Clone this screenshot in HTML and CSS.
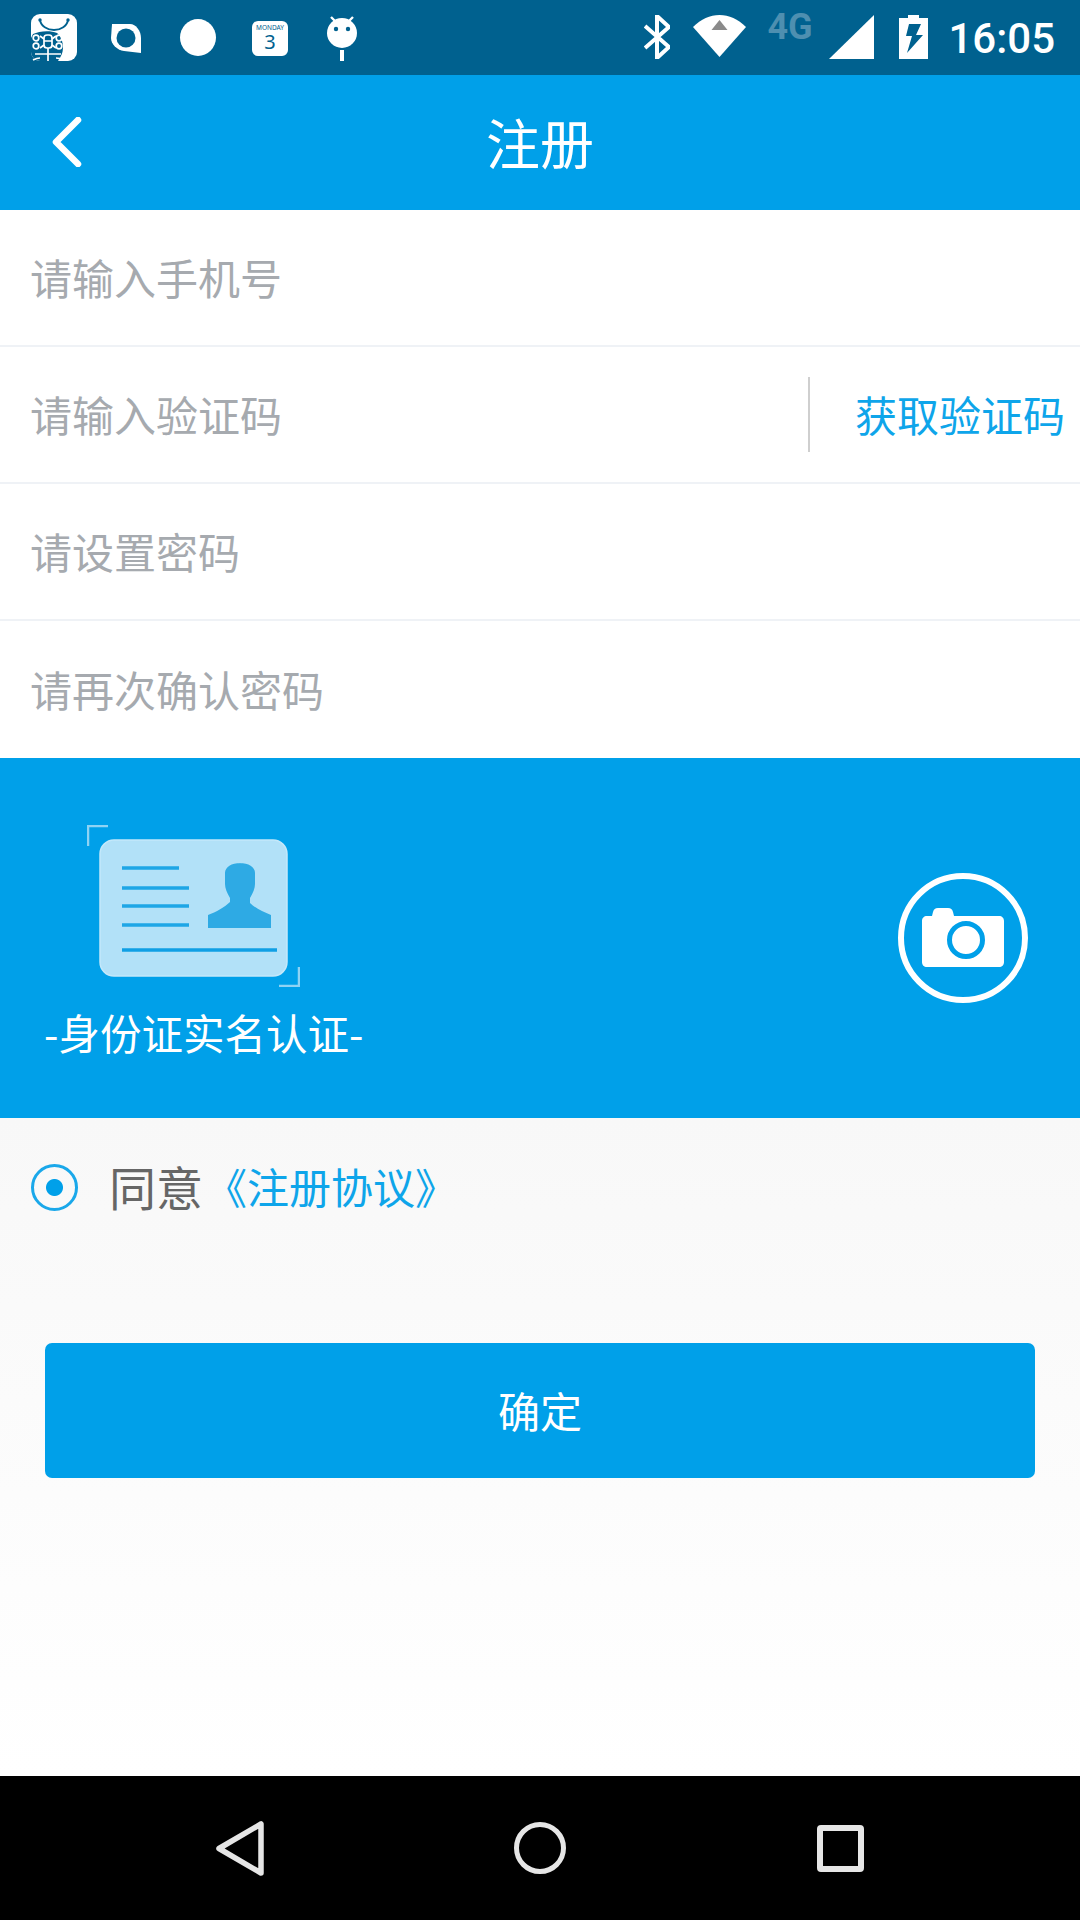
FILE: index.html
```html
<!DOCTYPE html>
<html lang="zh-CN">
<head>
  <meta charset="UTF-8">
  <meta name="viewport" content="width=device-width, initial-scale=1.0">
  <title>注册</title>
  <link rel="stylesheet" href="styles.css">
</head>
<body>
  <div class="phone">
    <!-- Status bar -->
    <div class="status-bar">
      <div class="status-left">
        <svg class="ic-shop" viewBox="0 0 46 47">
          <rect width="46" height="47" rx="9" fill="#fff"/>
          <path d="M9 6c1 6 7 10 14 10s13-4 14-10" fill="none" stroke="#00618f" stroke-width="1.800"/>
          <circle cx="9" cy="6" r="1.700" fill="#00618f"/>
          <circle cx="37" cy="6" r="1.700" fill="#00618f"/>
          <path d="M2 20c6-3 17-4 24-1 4 3 6 9 6 15 0 4-2 9-5 13H9a9 9 0 0 1-9-9V24z" fill="#00618f"/>
          <g fill="none" stroke="#fff" stroke-width="1.700">
            <rect x="13" y="21" width="8" height="13" rx="3"/>
            <path d="M13 27h8M17 34v13M4 40h26M9 44c-3 0-5 1-7 2M25 44c3 0 5 1 7 1M9 22l4 3M25 22l-4 3M9 34l4-3M25 34l-4-3"/>
            <circle cx="5" cy="24" r="2.800"/>
            <circle cx="5" cy="32" r="2.800"/>
            <circle cx="28" cy="24" r="2.800"/>
            <circle cx="28" cy="32" r="2.800"/>
          </g>
        </svg>
        <svg class="ic-ring" viewBox="0 0 30 30">
          <path d="M1 1h18c6 0 11 7 11 14v15l-17-2C6 27 0 21 0 15z" fill="#fff"/>
          <circle cx="15" cy="15" r="9.500" fill="#00618f"/>
        </svg>
        <div class="ic-dot"></div>
        <svg class="ic-cal" viewBox="0 0 36 35">
          <rect width="36" height="35" rx="6" fill="#fff"/>
          <text class="cal-day" x="18" y="9" text-anchor="middle">MONDAY</text>
          <text class="cal-num" x="18" y="28" text-anchor="middle">3</text>
        </svg>
        <svg class="ic-droid" viewBox="0 0 30 45">
          <path d="M4 1l5 5M26 1l-5 5" stroke="#fff" stroke-width="2.400"/>
          <circle cx="15" cy="17" r="15" fill="#fff"/>
          <circle cx="9" cy="13" r="2.200" fill="#00618f"/>
          <circle cx="21" cy="13" r="2.200" fill="#00618f"/>
          <rect x="13" y="34" width="4" height="11" fill="#fff"/>
        </svg>
      </div>
      <div class="status-right">
        <svg class="ic-bt" viewBox="0 0 26 44">
          <path d="M1 11l24 21-12 11V1l12 11L1 33" fill="none" stroke="#fff" stroke-width="4"/>
        </svg>
        <svg class="ic-wifi" viewBox="0 0 53 42">
          <path d="M0 12C8 4 17 0 26.500 0S45 4 53 12L26.500 42z" fill="#fff"/>
          <path d="M26.500 5l8 10h-16z" fill="#8a8a8a"/>
        </svg>
        <span class="net">4G</span>
        <svg class="ic-signal" viewBox="0 0 45 44"><path d="M45 0v44H0z" fill="#fff"/></svg>
        <svg class="ic-battery" viewBox="0 0 29 44">
          <path d="M9 0h11v3h9v41H0V3h9z" fill="#fff"/>
          <path d="M10 9h12l-5 11h7L8 38l5-17H7z" fill="#00618f"/>
        </svg>
        <span class="clock">16:05</span>
      </div>
    </div>

    <!-- Title bar -->
    <header class="title-bar">
      <svg class="back" viewBox="0 0 30 50">
        <path d="M26 3L4 25l22 22" fill="none" stroke="#fff" stroke-width="6.500" stroke-linecap="round" stroke-linejoin="round"/>
      </svg>
      <h1>注册</h1>
    </header>

    <!-- Form rows -->
    <div class="form-list">
      <div class="form-row"><span class="hint">请输入手机号</span></div>
      <div class="form-row">
        <span class="hint">请输入验证码</span>
        <span class="get-code">获取验证码</span>
      </div>
      <div class="form-row"><span class="hint">请设置密码</span></div>
      <div class="form-row"><span class="hint">请再次确认密码</span></div>
    </div>

    <!-- ID card -->
    <div class="id-panel">
      <div class="id-left">
        <svg class="id-card" viewBox="0 0 213 162">
          <path d="M1 21V1h20M212 142v19h-20" fill="none" stroke="#8fd3f4" stroke-width="2.500"/>
          <rect x="13" y="15" width="187" height="136" rx="14" fill="#b2e1f8" stroke="#c4e8fa" stroke-width="1.500"/>
          <g stroke="#1ea6e6" stroke-width="3.500">
            <path d="M35 43h57M35 63h67M35 81h67M35 100h67"/>
            <path d="M35 125h155" stroke="#0f9fe5"/>
          </g>
          <path d="M153.500 38c-9 0-15.500 4-15.500 10v11c0 4 2 9 5 14v4c-5 5-14 10-22 13v13h63V90c-8-3-16-7-21-12v-5c3-5 5-10 5-14V48c0-6-6.500-10-15.500-10z" fill="#2eaae4"/>
        </svg>
        <p class="id-label">-身份证实名认证-</p>
      </div>
      <svg class="camera" viewBox="0 0 130 130">
        <circle cx="65" cy="65" r="62" fill="none" stroke="#fff" stroke-width="6"/>
        <path d="M24 48c0-3 2-5 5-5h5l1-4c1-3 2-4 5-4h10c3 0 4 1 5 4l1 4h45c3 0 5 2 5 5v41c0 3-2 5-5 5H29c-3 0-5-2-5-5z" fill="#fff"/>
        <circle cx="68" cy="67" r="16.500" fill="#fff" stroke="#00a0e9" stroke-width="5"/>
      </svg>
    </div>

    <!-- Agreement and submit -->
    <div class="content">
      <div class="agree">
        <span class="radio"></span>
        <span class="agree-text">同意</span>
        <span class="agree-link">《注册协议》</span>
      </div>
      <button class="submit" type="button">确定</button>
    </div>

    <!-- Nav bar -->
    <div class="nav-bar">
      <svg class="nav-back" viewBox="0 0 48 55">
        <path d="M45 3v49L3 27.500z" fill="none" stroke="#e6e6e6" stroke-width="5.500" stroke-linejoin="round"/>
      </svg>
      <div class="nav-home"></div>
      <div class="nav-recent"></div>
    </div>
  </div>
</body>
</html>
```

FILE: styles.css
```css
/* Basic styles for the page */
* {
  box-sizing: border-box;
}

body {
  margin: 0;
  padding: 0;
  background-color: #fff;
  font-family: "Noto Sans CJK SC", "Noto Sans", sans-serif;
}

.phone {
  width: 1080px;
  height: 1920px;
  display: flex;
  flex-direction: column;
  overflow: hidden;
}

/* Status bar */
.status-bar {
  height: 75px;
  flex: none;
  background-color: #00618f;
  display: flex;
  justify-content: space-between;
  padding: 0 25px 0 31px;
}

.status-left,
.status-right {
  display: flex;
  align-items: flex-start;
}

.ic-shop {
  width: 46px;
  height: 47px;
  margin-top: 14px;
}

.ic-ring {
  width: 30px;
  height: 30px;
  margin: 23px 0 0 34px;
}

.ic-dot {
  width: 36px;
  height: 37px;
  margin: 19px 0 0 39px;
  border-radius: 50%;
  background-color: #fff;
}

.ic-cal {
  width: 36px;
  height: 35px;
  margin: 21px 0 0 36px;
}

.cal-day {
  font-family: "Noto Sans", sans-serif;
  font-size: 6.500px;
  fill: #00618f;
}

.cal-num {
  font-family: "Noto Sans", sans-serif;
  font-size: 20px;
  fill: #00618f;
}

.ic-droid {
  width: 30px;
  height: 45px;
  margin: 16px 0 0 39px;
}

.ic-bt {
  width: 26px;
  height: 44px;
  margin-top: 15px;
}

.ic-wifi {
  width: 53px;
  height: 42px;
  margin: 15px 0 0 23px;
}

.net {
  width: 49px;
  margin: 6px 0 0 21px;
  font-family: "Roboto", sans-serif;
  font-size: 36px;
  font-weight: 700;
  line-height: 42px;
  color: #4e8fb0;
}

.ic-signal {
  width: 45px;
  height: 44px;
  margin: 15px 0 0 13px;
}

.ic-battery {
  width: 29px;
  height: 44px;
  margin: 15px 0 0 25px;
}

.clock {
  margin: 14px 0 0 20px;
  font-family: "Roboto", sans-serif;
  font-size: 42px;
  font-weight: 500;
  line-height: 50px;
  color: #fff;
}

/* Title bar */
.title-bar {
  height: 135px;
  flex: none;
  background-color: #00a0e9;
  position: relative;
  display: flex;
  align-items: center;
  justify-content: center;
}

.title-bar h1 {
  margin: 0 0 3px;
  font-size: 54px;
  font-weight: 400;
  color: #fff;
}

.back {
  position: absolute;
  left: 52px;
  top: 42px;
  width: 30px;
  height: 50px;
}

/* Form rows */
.form-row {
  height: 137px;
  display: flex;
  align-items: center;
  justify-content: space-between;
  padding-left: 30px;
  background-color: #fff;
  border-bottom: 2px solid #eff2f6;
}

.form-row:last-child {
  border-bottom: none;
}

.hint {
  margin-bottom: 2px;
  font-size: 42px;
  color: #a6aaaf;
}

.get-code {
  width: 272px;
  height: 75px;
  padding-left: 45px;
  border-left: 2px solid #cfcfcf;
  font-size: 42px;
  line-height: 73px;
  color: #0ea5ea;
  white-space: nowrap;
}

/* ID card */
.id-panel {
  height: 360px;
  flex: none;
  background-color: #00a0e9;
  display: flex;
  justify-content: space-between;
  align-items: flex-start;
  padding: 67px 52px 0 44px;
}

.id-card {
  display: block;
  width: 213px;
  height: 162px;
  margin-left: 43px;
}

.id-label {
  margin: 17px 0 0;
  font-size: 41.500px;
  line-height: 56px;
  color: #fff;
}

.camera {
  width: 130px;
  height: 130px;
  margin-top: 48px;
}

/* Agreement and submit */
.content {
  flex: 1;
  background: linear-gradient(#f8f8f8, #fff);
  padding: 0 45px;
}

.agree {
  height: 138px;
  display: flex;
  align-items: center;
  margin-left: -14px;
}

.radio {
  width: 47px;
  height: 47px;
  border: 3px solid #1aa8ea;
  border-radius: 50%;
  background: radial-gradient(circle, #00a0e9 0 8px, transparent 9px);
}

.agree-text {
  margin: 0 0 4px 31px;
  font-size: 47px;
  color: #666;
}

.agree-link {
  margin: 0 0 4px 2px;
  font-size: 42px;
  color: #0ea5ea;
}

.submit {
  display: block;
  width: 990px;
  height: 135px;
  margin-top: 87px;
  padding-bottom: 3px;
  border: none;
  border-radius: 7px;
  background-color: #00a0e9;
  font-family: inherit;
  font-size: 42px;
  color: #fff;
}

/* Nav bar */
.nav-bar {
  height: 144px;
  flex: none;
  background-color: #000;
  display: flex;
  align-items: center;
  padding-left: 216px;
}

.nav-back {
  width: 48px;
  height: 55px;
}

.nav-home {
  width: 52px;
  height: 52px;
  margin-left: 250px;
  border: 5.500px solid #e6e6e6;
  border-radius: 50%;
}

.nav-recent {
  width: 47px;
  height: 47px;
  margin-left: 251px;
  border: 6px solid #e6e6e6;
  border-radius: 4px;
}
```
